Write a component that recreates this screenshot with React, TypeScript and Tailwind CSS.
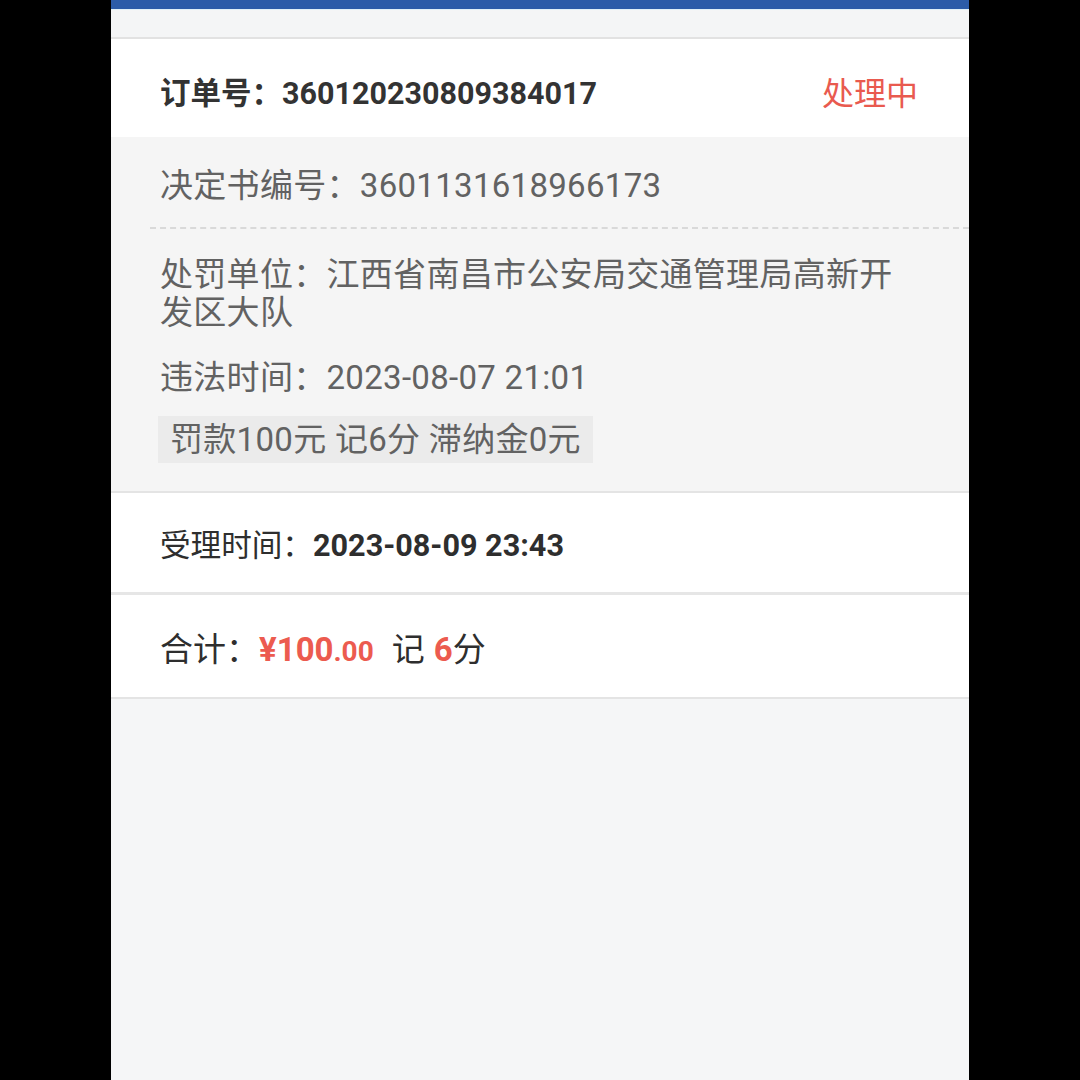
import React from "react";

const font = "font-['Roboto','Noto_Sans_CJK_SC',sans-serif]";

const DetailLine = ({ label, value }: { label: string; value: string }) => (
  <p className="text-[33px] leading-[38px] tracking-[0.3px] text-[#626262]">
    {label}：{value}
  </p>
);

const App = () => {
  return (
    <div className={`flex justify-center bg-black h-[1080px] overflow-hidden ${font}`}>
      <div className="w-[858px] h-full flex flex-col bg-[#f5f6f7]">
        <div className="h-[9px] bg-[#2b5ca8]" />
        <div className="h-px bg-[#dff0f7]" />
        <div className="h-[29px] bg-[#f4f5f6] border-b-2 border-[#e2e2e2]" />

        {/* order header */}
        <div className="h-[98px] bg-white flex items-center justify-between pl-[49px] pr-[51px] pt-[12px]">
          <p className="text-[30.5px] font-bold text-[#333]">
            订单号：<span>360120230809384017</span>
          </p>
          <span className="text-[32px] text-[#e95a4f]">处理中</span>
        </div>

        {/* details */}
        <div className="bg-[#f5f5f5] pt-[30px] pb-[28px] border-b-2 border-[#e4e4e4]">
          <div className="pl-[49px]">
            <DetailLine label="决定书编号" value="3601131618966173" />
          </div>
          <div className="ml-[39px] mt-[22px] border-t-2 border-dashed border-[#d9d9d9]" />
          <div className="pl-[49px] pr-[60px] mt-[27px] flex flex-col gap-[27px]">
            <DetailLine label="处罚单位" value="江西省南昌市公安局交通管理局高新开发区大队" />
            <DetailLine label="违法时间" value="2023-08-07 21:01" />
          </div>
          <div className="pl-[47px] mt-[19px]">
            <span className="inline-flex items-center h-[47px] px-[12px] bg-[#ebebeb] text-[33px] tracking-[0.3px] text-[#626262]">
              罚款100元 记6分 滞纳金0元
            </span>
          </div>
        </div>

        {/* accept time */}
        <div className="h-[102px] bg-white flex items-center pl-[49px] pt-[6px] border-b-[3px] border-[#e6e6e6]">
          <p className="text-[30.6px] text-[#2e2e2e]">
            受理时间：<span className="font-bold">2023-08-09 23:43</span>
          </p>
        </div>

        {/* total */}
        <div className="h-[104px] bg-white flex items-center pl-[49px] pt-[8px] border-b-2 border-[#e4e4e4]">
          <p className="text-[33px] text-[#2e2e2e] flex items-baseline">
            合计：
            <span className="font-bold text-[#ec5b4f]">
              ¥100<span className="text-[28px]">.00</span>
            </span>
            <span className="ml-[18px]">记</span>
            <span className="ml-[9px] font-bold text-[#ec5b4f]">6</span>
            <span>分</span>
          </p>
        </div>

        <div className="flex-1 bg-[#f5f6f7]" />
      </div>
    </div>
  );
};

export default App;
